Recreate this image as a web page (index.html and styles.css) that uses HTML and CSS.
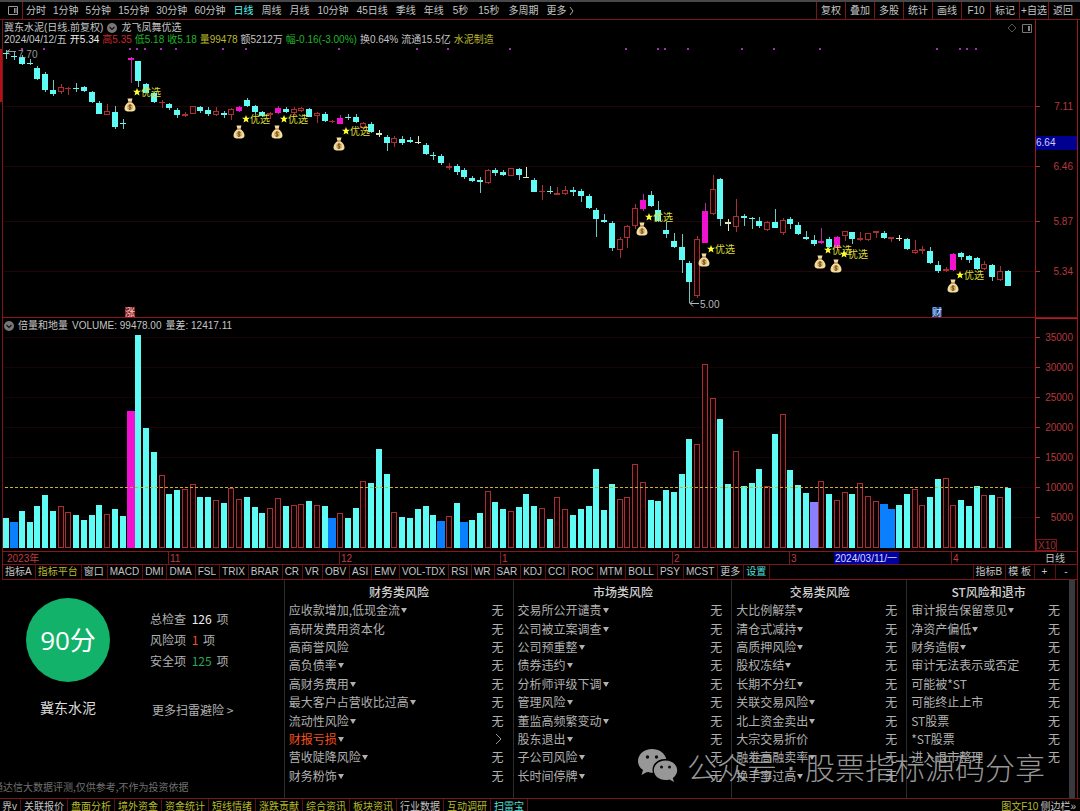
FILE: index.html
```html
<!DOCTYPE html>
<html lang="zh-CN">
<head>
    <meta charset="utf-8">
    <title>冀东水泥 日线</title>
    <link rel="stylesheet" href="styles.css">
</head>
<body>

<!-- Period toolbar -->
<header class="toolbar">
    <button class="layoutButton" aria-label="布局">
        <svg width="10" height="9" viewBox="0 0 10 9"><path d="M.5.5h9v8h-9zM6.5 2v5M8 2v5" fill="none" stroke="#999"/></svg>
    </button>
    <nav class="periods">
        <button class="minutes">分时</button>
        <button class="minutes">1分钟</button>
        <button class="minutes">5分钟</button>
        <button class="minutes">15分钟</button>
        <button class="minutes">30分钟</button>
        <button class="minutes">60分钟</button>
        <button class="active">日线</button>
        <button>周线</button>
        <button>月线</button>
        <button>10分钟</button>
        <button>45日线</button>
        <button>季线</button>
        <button>年线</button>
        <button class="seconds">5秒</button>
        <button class="seconds">15秒</button>
        <button>多周期</button>
        <button>更多
            <svg width="5" height="8" viewBox="0 0 5 8"><path d="M1 0l3 4-3 4" fill="none" stroke="#aaa"/></svg>
        </button>
    </nav>
    <div class="tools">
        <button>复权</button>
        <button>叠加</button>
        <button>多股</button>
        <button>统计</button>
        <button>画线</button>
        <button>F10</button>
        <button>标记</button>
        <button>+自选</button>
        <button>返回</button>
    </div>
</header>

<main>
    <!-- Candles -->
    <section class="pane">
        <div class="paneHeader">
            <div class="titleLine">
                <span>冀东水泥(日线.前复权)</span>
                <svg width="10" height="10" viewBox="0 0 10 10"><circle cx="5" cy="5" r="5" fill="#777"/><path d="M2.500 4L5 6.500 7.500 4" fill="none" stroke="#111" stroke-width="1.200"/></svg>
                <span>龙飞凤舞优选</span>
            </div>
            <div class="quoteLine">
                <span>2024/04/12/五</span>
                <span class="white">开5.34</span>
                <span class="up">高5.35</span>
                <span class="down">低5.18</span>
                <span class="down">收5.18</span>
                <span class="yellow">量99478</span>
                <span>额5212万</span>
                <span class="down">幅-0.16(-3.00%)</span>
                <span>换0.64%</span>
                <span>流通15.5亿</span>
                <span class="yellow">水泥制造</span>
            </div>
        </div>
        <svg id="priceChart" class="chart" viewBox="0 20 1080 298"></svg>
    </section>

    <!-- Volume -->
    <section class="pane">
        <div class="paneHeader volumeHeader">
            <svg width="10" height="10" viewBox="0 0 10 10"><circle cx="5" cy="5" r="5" fill="#777"/><path d="M2.500 4L5 6.500 7.500 4" fill="none" stroke="#111" stroke-width="1.200"/></svg>
            <span>倍量和地量</span>
            <span>VOLUME: 99478.00</span>
            <span>量差: 12417.11</span>
        </div>
        <svg id="volumeChart" class="chart" viewBox="0 318 1080 246"></svg>
    </section>

    <!-- Indicator tabs -->
    <nav class="indicators">
        <button>指标A</button>
        <button class="yellow">指标平台</button>
        <button>窗口</button>
        <button>MACD</button>
        <button>DMI</button>
        <button>DMA</button>
        <button>FSL</button>
        <button>TRIX</button>
        <button>BRAR</button>
        <button>CR</button>
        <button>VR</button>
        <button>OBV</button>
        <button>ASI</button>
        <button>EMV</button>
        <button>VOL-TDX</button>
        <button>RSI</button>
        <button>WR</button>
        <button>SAR</button>
        <button>KDJ</button>
        <button>CCI</button>
        <button>ROC</button>
        <button>MTM</button>
        <button>BOLL</button>
        <button>PSY</button>
        <button>MCST</button>
        <button>更多</button>
        <button class="cyan">设置</button>
        <span class="spacer"></span>
        <button class="first">指标B</button>
        <button>模 板</button>
        <button class="zoomButton">+</button>
        <button class="zoomButton">-</button>
    </nav>

    <!-- Risk check -->
    <section class="risk">
        <div class="summary">
            <div class="scoreBox">
                <div class="score">90分</div>
                <div class="stockName">冀东水泥</div>
            </div>
            <div class="counts">
                <p>总检查 <b class="white">126</b> 项</p>
                <p>风险项 <b class="orange">1</b> 项</p>
                <p>安全项 <b class="green">125</b> 项</p>
                <a href="#more">更多扫雷避险 &gt;</a>
            </div>
            <p class="disclaimer">通达信大数据评测,仅供参考,不作为投资依据</p>
        </div>

        <div class="riskColumn">
            <h2>财务类风险</h2>
            <ul>
                <li><span class="more">应收款增加,低现金流</span><span>无</span></li>
                <li><span>高研发费用资本化</span><span>无</span></li>
                <li><span>高商誉风险</span><span>无</span></li>
                <li><span class="more">高负债率</span><span>无</span></li>
                <li><span class="more">高财务费用</span><span>无</span></li>
                <li><span class="more">最大客户占营收比过高</span><span>无</span></li>
                <li><span class="more">流动性风险</span><span>无</span></li>
                <li><span class="more"><span class="orange">财报亏损</span></span><svg width="12" height="12" viewBox="0 0 12 12"><path d="M4 1l5 5-5 5" fill="none" stroke="#999"/></svg></li>
                <li><span class="more">营收陡降风险</span><span>无</span></li>
                <li><span class="more">财务粉饰</span><span>无</span></li>
            </ul>
        </div>

        <div class="riskColumn">
            <h2>市场类风险</h2>
            <ul>
                <li><span class="more">交易所公开谴责</span><span>无</span></li>
                <li><span class="more">公司被立案调查</span><span>无</span></li>
                <li><span class="more">公司预重整</span><span>无</span></li>
                <li><span class="more">债券违约</span><span>无</span></li>
                <li><span class="more">分析师评级下调</span><span>无</span></li>
                <li><span class="more">管理风险</span><span>无</span></li>
                <li><span class="more">董监高频繁变动</span><span>无</span></li>
                <li><span class="more">股东退出</span><span>无</span></li>
                <li><span class="more">子公司风险</span><span>无</span></li>
                <li><span class="more">长时间停牌</span><span>无</span></li>
            </ul>
        </div>

        <div class="riskColumn">
            <h2>交易类风险</h2>
            <ul>
                <li><span class="more">大比例解禁</span><span>无</span></li>
                <li><span class="more">清仓式减持</span><span>无</span></li>
                <li><span class="more">高质押风险</span><span>无</span></li>
                <li><span class="more">股权冻结</span><span>无</span></li>
                <li><span class="more">长期不分红</span><span>无</span></li>
                <li><span class="more">关联交易风险</span><span>无</span></li>
                <li><span class="more">北上资金卖出</span><span>无</span></li>
                <li><span>大宗交易折价</span><span>无</span></li>
                <li><span class="more">融券高融卖率</span><span>无</span></li>
                <li><span class="more">换手率过高</span><span>无</span></li>
            </ul>
        </div>

        <div class="riskColumn">
            <h2>ST风险和退市</h2>
            <ul>
                <li><span class="more">审计报告保留意见</span><span>无</span></li>
                <li><span class="more">净资产偏低</span><span>无</span></li>
                <li><span class="more">财务造假</span><span>无</span></li>
                <li><span>审计无法表示或否定</span><span>无</span></li>
                <li><span>可能被*ST</span><span>无</span></li>
                <li><span>可能终止上市</span><span>无</span></li>
                <li><span>ST股票</span><span>无</span></li>
                <li><span>*ST股票</span><span>无</span></li>
                <li><span>进入退市整理</span><span>无</span></li>
            </ul>
        </div>
        <div class="scrollbar"></div>

        <div class="watermark">
            <svg width="40" height="34" viewBox="0 0 40 34">
                <path d="M14 0C6 0 0 5.500 0 12c0 4 2 7 5 9l-1.500 5 5.500-3c2 .6 3.500.8 6 .8-.3-1-.5-2-.5-3C14.500 14.500 20 10 27 10h1.200C27 4 21 0 14 0z" fill="#a8a8a8"/>
                <path d="M27.500 11.500c-6.500 0-11.700 4.300-11.700 9.700s5.200 9.800 11.700 9.800c1.500 0 2.800-.2 4-.6l4.500 2.600-1.200-4c2.700-2 4.400-4.700 4.400-7.800 0-5.400-5.200-9.700-11.700-9.700z" fill="#a8a8a8"/>
                <g fill="#111"><circle cx="9.500" cy="8" r="1.700"/><circle cx="18.500" cy="8" r="1.700"/><circle cx="23.500" cy="18" r="1.500"/><circle cx="31.500" cy="18" r="1.500"/></g>
            </svg>
            <span>公众号</span>
            <span class="dot">·</span>
            <span>股票指标源码分享</span>
        </div>
    </section>
</main>

<!-- Bottom tabs -->
<footer class="bottomTabs">
    <button class="first">界v</button>
    <button>关联报价</button>
    <button class="yellow">盘面分析</button>
    <button class="yellow">境外资金</button>
    <button class="yellow">资金统计</button>
    <button class="yellow">短线情绪</button>
    <button class="yellow">涨跌贡献</button>
    <button class="yellow">综合资讯</button>
    <button class="yellow">板块资讯</button>
    <button>行业数据</button>
    <button class="yellow">互动调研</button>
    <button class="cyan">扫雷宝</button>
    <span class="spacer"></span>
    <button class="side yellow">图文F10</button>
    <button class="side">侧边栏»</button>
</footer>

<script src="chart.js"></script>
</body>
</html>
```
FILE: styles.css
```css
/* General Styles */
* {
    box-sizing: border-box;
}

body {
    margin: 0;
    min-height: 100vh;
    background-color: #000;
    border-top: 2px solid #48484b;
    color: #c4c4c4;
    font-family: "Liberation Sans", "Noto Sans CJK SC", sans-serif;
    font-size: 10px;
    line-height: 12px;
    overflow: hidden;
}

button {
    flex: none;
    background: none;
    border: none;
    margin: 0;
    padding: 0;
    color: inherit;
    font: inherit;
    white-space: nowrap;
    cursor: pointer;
}

p, h2, ul {
    margin: 0;
    padding: 0;
}

svg {
    flex: none;
}

.white { color: #eee; }
.yellow { color: #b9b92c; }
.cyan { color: #4fe0dc; }
.orange { color: #f4511e; }
.green { color: #2aa85a; }
.up { color: #c8282d; }
.down { color: #1fb52a; }

.spacer {
    flex: 1;
}

/* Period toolbar */
.toolbar {
    display: flex;
    height: 18px;
    border-bottom: 1px solid #7c1518;
}

.layoutButton {
    width: 23px;
    padding-left: 3px;
    border-right: 1px solid #7c1518;
    line-height: 0;
}

.periods {
    display: flex;
    flex: 1;
}

.periods button {
    padding: 0 4px;
}

.periods .minutes {
    padding: 0 4px 0 3px;
}

.periods .seconds {
    padding: 0 5px;
}

.periods svg {
    vertical-align: -1px;
}

.periods .active {
    color: #5ff5ef;
}

.tools {
    display: flex;
    padding-right: 3px;
}

.tools button {
    width: 29px;
    border-left: 1px solid #7c1518;
}

/* Chart panes */
.pane {
    position: relative;
}

.chart {
    display: block;
    width: 100%;
    height: auto;
}

.chart text {
    font-size: 10px;
}

.paneHeader {
    position: absolute;
    top: 2px;
    left: 4px;
}

.titleLine, .quoteLine, .volumeHeader {
    display: flex;
    align-items: center;
}

.titleLine {
    gap: 4px;
}

.quoteLine {
    gap: 3px;
}

.volumeHeader {
    gap: 4px;
}

/* Indicator tabs */
.indicators {
    display: flex;
    height: 16px;
    margin: 0 2px;
    border: 1px solid #7c1518;
}

.indicators button {
    padding: 0 3px 0 2px;
    border-right: 1px solid #5c1013;
}

.indicators .first {
    border-left: 1px solid #5c1013;
}

.indicators .zoomButton {
    width: 21px;
}

.indicators .zoomButton:last-child {
    border-right: none;
}

/* Risk check */
.risk {
    position: relative;
    display: grid;
    grid-template-columns: 284fr 229fr 219fr 175fr 163fr 6px;
    height: 218px;
    margin-right: 2px;
    padding-right: 2px;
    border-right: 1px solid #7c1518;
    font-family: "Noto Sans CJK SC", sans-serif;
    font-size: 12px;
    line-height: 18px;
    color: #b0b0b0;
}

.summary {
    display: grid;
    grid-template-columns: 136px 1fr;
    grid-template-rows: 1fr 20px;
}

.scoreBox {
    padding: 18px 0 0 26px;
    text-align: center;
}

.score {
    width: 84px;
    height: 84px;
    border-radius: 50%;
    background-color: #12b26b;
    color: #fff;
    font-family: "Open Sans", "Noto Sans CJK SC", sans-serif;
    font-size: 26px;
    line-height: 84px;
}

.stockName {
    width: 84px;
    margin-top: 16px;
    color: #ddd;
    font-size: 14px;
}

.counts {
    padding: 28px 0 0 14px;
}

.counts p {
    line-height: 21px;
}

.counts b {
    margin: 0 2px 0 3px;
    font-weight: normal;
}

.counts a {
    display: block;
    margin: 30px 0 0 2px;
    color: #b0b0b0;
    text-decoration: none;
}

.disclaimer {
    grid-column: 1 / 3;
    margin-left: -7px;
    color: #707070;
    font-size: 10px;
}

.riskColumn {
    display: flex;
    flex-direction: column;
    padding: 3px 9px 13px 4px;
    border-left: 1px solid #2c2c2c;
}

.riskColumn h2 {
    padding-left: 6px;
    color: #d0d0d0;
    font-size: 12px;
    font-weight: 500;
    text-align: center;
}

.riskColumn ul {
    display: grid;
    grid-template-rows: repeat(10, 1fr);
    flex: 1;
    list-style: none;
}

.riskColumn li {
    display: flex;
    align-items: center;
    justify-content: space-between;
}

.riskColumn .more::after {
    content: "";
    display: inline-block;
    margin-left: 1px;
    border: 3px solid transparent;
    border-top: 5px solid #b0b0b0;
    border-bottom: none;
    vertical-align: 2px;
}

.scrollbar {
    background-color: #3a3a3e;
}

.watermark {
    position: absolute;
    right: 32px;
    bottom: 12px;
    display: flex;
    align-items: center;
    gap: 9px;
    color: #a8a8a8;
    font-size: 30px;
    font-weight: 300;
    line-height: 40px;
    opacity: 0.9;
}

.watermark .dot {
    font-family: "Liberation Sans", sans-serif;
}

/* Bottom tabs */
.bottomTabs {
    display: flex;
    height: 16px;
    border-top: 1px solid #7c1518;
}

.bottomTabs button {
    padding: 0 3px;
    border-right: 1px solid #5c1013;
}

.bottomTabs .first {
    padding-left: 2px;
}

.bottomTabs .side {
    padding: 0 1px;
    border-right: none;
}

.bottomTabs .side:last-child {
    padding-right: 4px;
}
```
FILE: chart.js
```js
const SVG_NS = "http://www.w3.org/2000/svg";
const FIRST_X = 6.3;
const STEP = 7.763;
const RED = "#a83034";

// c = falling, r = rising, m = signal, w = flat, b = low volume, v = selected
const COLORS = { c: "#5ffbf5", r: RED, m: "#f012d0", w: "#d8e8c0", b: "#0a80ff", v: "#8a80ff" };

// kind, high, body top, body bottom, low (three units to a pixel)
const candles = `c150,158,163,178 c155,167,172,180 c165,172,191,195 c178,188,193,196 c198,203,237,240
c215,222,270,275 c240,270,283,287 r252,260,276,282 r260,263,267,285 c248,263,267,275
c258,262,273,276 c272,277,307,310 c303,308,341,343 r312,332,344,346 c318,337,382,387
c358,368,372,388 m172,174,179,250 c182,182,242,262 c248,252,278,280 c275,280,307,308
r300,305,309,325 c308,311,325,331 c325,331,346,353 r335,343,347,350 r318,319,341,343
c318,321,333,340 c322,331,343,347 r322,333,345,348 c332,338,345,355 r325,327,346,360
m318,320,333,336 c294,301,318,322 c315,319,336,343 c333,337,347,350 r335,340,344,358
m318,325,339,342 c322,328,335,340 r320,326,340,345 r320,323,332,336 c325,327,350,352
r335,338,348,370 c337,341,362,365 r360,363,367,370 m345,353,371,373 c342,350,354,360
c342,351,367,370 r366,370,385,390 c366,372,396,399 w390,400,404,412 c405,410,430,452
r408,413,430,440 c408,417,429,434 c412,419,427,430 w408,425,429,432 c430,434,462,465
c455,464,468,480 c463,468,489,496 r488,498,503,510 c492,498,516,525 c505,511,532,536
c527,533,544,547 c530,540,546,578 r508,511,548,553 c505,509,520,528 c510,515,524,528
r504,505,527,529 c505,508,524,540 w502,530,533,535 c533,539,575,577 r555,572,577,600
c557,572,577,582 r560,578,584,586 r557,571,581,586 c560,571,577,587 c567,572,587,605
c583,587,625,627 c625,629,658,712 c642,661,666,670 c663,669,743,752 r710,717,749,775
r675,677,713,745 r613,625,677,687 m583,600,627,632 c574,584,617,620 c603,630,663,666
c666,689,703,713 c698,724,740,743 c702,740,780,820 c783,790,846,910 r707,717,888,893
m608,632,728,730 r525,568,643,646 c535,538,657,678 w657,667,671,692 r597,648,680,695
c642,647,655,678 c650,653,657,688 c650,663,678,685 r663,666,691,693 c627,666,683,685
r655,660,698,705 c650,657,671,686 c667,674,702,704 c693,712,717,720 c705,719,733,738
m685,722,729,733 c710,716,740,743 m708,710,741,750 r692,694,707,722 c695,697,718,733
r695,713,721,724 r698,700,719,722 r692,694,700,715 c694,699,715,717 r710,712,716,726
w704,713,717,724 c713,716,747,750 r720,750,759,762 r738,748,752,762 c740,752,788,792
c782,796,812,818 r800,808,813,817 m760,762,810,812 c756,760,770,780 c764,768,779,790
c772,774,806,810 r783,791,806,810 c792,796,831,842 r798,814,839,842 c810,813,857,859`;

const volumes = `c91 b78 c111 c78 c126 c158 c111 r126 r108 c98 c83 c98 c128 r103 c118 c95 m411 c640 c361 c288
r220 c161 c173 r178 r193 c153 c153 r143 c136 r181 r146 c153 c123 c106 r121 r151 c126 r128 r133 c141
r130 c126 b91 r105 c91 c121 r200 c196 c298 c223 r108 c93 c90 c118 c125 c100 b81 r96 c136 b78
c83 c106 r172 c138 c116 r112 c123 c161 c126 r121 c88 r153 r118 c98 c118 c125 c238 c115 c193 r147
r153 r253 r198 c145 c140 c173 c168 c221 c326 r313 r552 r451 c388 c191 r292 c185 c196 c238 r186 c341
r403 c233 c188 c166 v138 r202 c163 r145 r168 c163 r195 r157 r141 b133 b118 c128 c163 r176 r130 c153
c206 r210 r128 c143 c126 c185 r158 c158 r153 c180`;

function add(parent, name, attrs, text) {
    const node = document.createElementNS(SVG_NS, name);
    for (const key in attrs) {
        node.setAttribute(key, attrs[key]);
    }
    if (text) {
        node.textContent = text;
    }
    parent.appendChild(node);
    return node;
}

function rect(parent, x, y, width, height, fill) {
    add(parent, "rect", { x, y, width, height, fill });
}

function label(parent, x, y, text, fill, anchor) {
    add(parent, "text", { x, y, fill, "text-anchor": anchor || "start" }, text);
}

// Filled bar, or an outlined one for rising days
function bar(parent, x, y, width, height, kind) {
    if (kind === "r" && height > 2) {
        add(parent, "rect", { x: x + 0.5, y: y + 0.5, width: width - 1, height: height - 1, fill: "#100203", stroke: RED });
    } else {
        rect(parent, x, y, width, height, COLORS[kind]);
    }
}

const price = document.getElementById("priceChart");
const volume = document.getElementById("volumeChart");

// Price grid and scale
[["7.11", 106], ["6.46", 166], ["5.87", 221], ["5.34", 271]].forEach(([value, y]) => {
    rect(price, 4, y, 1031, 1, "#220508");
    rect(price, 1036, y, 4, 1, RED);
    label(price, 1073, y + 4, value, "#b8383c", "end");
});
rect(price, 2, 20, 1, 298, "#7c1518");
rect(price, 0, 49, 2, 53, "#b01218");
rect(price, 1035, 20, 1, 298, "#9a1a1e");
rect(price, 1077, 20, 1, 298, "#9a1a1e");
rect(price, 2, 317, 1076, 1, "#8c1519");
rect(price, 1036, 136, 41, 14, "#000090");
label(price, 1036, 146, "6.64", "#d0d0ff");

// Corner icons
add(price, "path", { d: "M1012 24l4 4-4 4-4-4z", fill: "none", stroke: "#555" });
add(price, "path", { d: "M1022.5 24.500h9v8h-9z", fill: "none", stroke: "#777" });
rect(price, 1028, 26, 2, 5, "#888");

candles.split(/\s+/).forEach((item, i) => {
    const kind = item[0];
    const [high, top, bottom, low] = item.slice(1).split(",").map(v => Math.round(v / 3));
    const x = Math.round(FIRST_X + i * STEP);
    rect(price, x, high, 1, low - high, kind === "m" ? "#a83090" : kind === "c" ? "#6fc8c0" : COLORS[kind]);
    bar(price, x - 3, top, 6, Math.max(1, bottom - top), kind);
});

// Event dots
[22, 44, 130, 137, 145, 161, 176, 223, 246, 339, 417, 448, 510, 626, 658, 665, 688,
 742, 774, 820, 937, 960, 967, 976].forEach(x => rect(price, x - 1, 48, 2, 2, "#a030b0"));

// Buy signals: star with text, money bag below
[[137, 92, 130, 105], [246, 119, 239, 132], [284, 119, 277, 132], [346, 131, 339, 144],
 [649, 217, 642, 229], [711, 249, 704, 260], [828, 250, 820, 262], [844, 254, 836, 266],
 [960, 275, 953, 286]].forEach(([x, y, bagX, bagY]) => {
    add(price, "path", {
        d: "M0-4l1.100 2.700 2.900.1-2.300 1.800.8 2.900L0 1.900l-2.500 1.600.8-2.900L-4-1.200l2.900-.1z",
        fill: "#ffff30", transform: `translate(${x} ${y})`
    });
    label(price, x + 4, y + 4, "优选", "#dede34");
    const bag = add(price, "g", { transform: `translate(${bagX} ${bagY})` });
    add(bag, "path", { d: "M-2.500-6.500h5L1.500-3C4-1 5.500 1 5.500 3.500 5.500 6 3.500 6.500 0 6.500S-5.500 6-5.500 3.500C-5.500 1-4-1-1.500-3z", fill: "#f3dca0" });
    add(bag, "path", { d: "M-2-3h4", stroke: "#a86a38" });
    add(bag, "circle", { cx: 0, cy: 2, r: 3, fill: "#d8b468" });
    add(bag, "path", { d: "M1.500.5C0-.5-1.500.2-1 1.500s2.500.5 2 2-2 1-2.500.2M0-.5v5", fill: "none", stroke: "#59391a", "stroke-width": 0.8 });
});

label(price, 18, 58, "7.70", "#999");
add(price, "path", { d: "M7 51.500h9M7 51.500l3-2M7 51.500l3 3", fill: "none", stroke: "#999" });
label(price, 700, 308, "5.00", "#b8b8b8");
add(price, "path", { d: "M690 303.500h9M690 303.500l3-3M690 303.500l3 3", fill: "none", stroke: "#b8b8b8" });
rect(price, 125, 307, 10, 10, "#8a1c20");
label(price, 125, 316, "涨", "#f4cccc");
rect(price, 932, 307, 10, 10, "#123a80");
label(price, 932, 316, "财", "#d0e4ff");

// Volume grid and scale
for (let i = 0; i < 7; i++) {
    const y = 337 + i * 30;
    rect(volume, 4, y, 1031, 1, "#160406");
    rect(volume, 1036, y, 4, 1, RED);
    label(volume, 1073, y + 4, String(35000 - i * 5000), "#b8383c", "end");
}

volumes.split(/\s+/).forEach((item, i) => {
    const kind = item[0];
    const height = Math.round(item.slice(1) / 3);
    const wide = "bmv".includes(kind);
    const x = Math.round(FIRST_X + i * STEP) - 3;
    bar(volume, wide ? x - 1 : x, 548 - height, wide ? 8 : 6, height, kind);
});
add(volume, "path", { d: "M5 487.500H1010", stroke: "#c8b428", "stroke-dasharray": "3 2" });

rect(volume, 2, 318, 1, 246, "#7c1518");
rect(volume, 1035, 318, 1, 233, "#b01c20");
rect(volume, 1036, 318, 41, 1, "#b01c20");
rect(volume, 1077, 318, 1, 246, "#9a1a1e");
rect(volume, 2, 551, 1076, 1, "#8c1519");
add(volume, "rect", { x: 1036.5, y: 539.5, width: 20, height: 11, fill: "none", stroke: "#7c1518" });
label(volume, 1038, 549, "X10", "#a03034");

// Months
[[7, "2023年"], [170, "11"], [341, "12"], [502, "1"], [674, "2"], [791, "3"], [953, "4"]].forEach(([x, text], i) => {
    if (i) {
        rect(volume, x - 2, 552, 1, 12, "#7c1518");
    }
    label(volume, x, 562, text, "#c03c40");
});
rect(volume, 834, 552, 65, 12, "#0000a0");
label(volume, 835, 562, "2024/03/11/一", "#d8d8ff");
label(volume, 1045, 562, "日线", "#c4c4c4");
```
